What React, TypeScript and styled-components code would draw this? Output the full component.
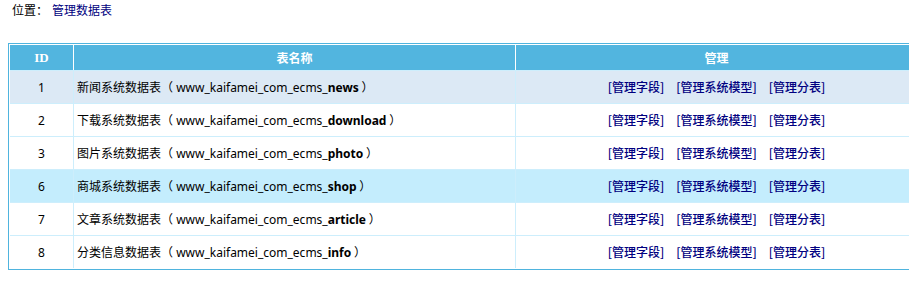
import React from "react";
import styled, { createGlobalStyle } from "styled-components";

const GlobalStyle = createGlobalStyle`
  html {
    overflow: hidden;
  }
  body {
    margin: 0;
    background: #ffffff;
    font-family: "Noto Sans", "Noto Sans CJK SC", sans-serif;
    font-size: 12px;
    color: #000000;
  }
`;

const Page = styled.div`
  padding: 0 8px;
`;

const Location = styled.div`
  height: 20px;
  line-height: 20px;
  padding: 0 4px;
  font-family: "Noto Sans CJK SC", sans-serif;
`;

const NavLink = styled.a`
  color: #000080;
  text-decoration: none;
  margin-left: 4px;
`;

const Table = styled.table`
  margin-top: 23px;
  width: 911px;
  border: 1px solid #4fb4de;
  border-collapse: separate;
  border-spacing: 0;
  padding: 1px;
  background: #ffffff;
`;

const HeadCell = styled.th<{ $first?: boolean; $serif?: boolean }>`
  height: 25px;
  padding: 0;
  background: #52b5df;
  color: #ffffff;
  font-weight: bold;
  font-size: ${(p) => (p.$serif ? "13px" : "12px")};
  font-family: ${(p) =>
    p.$serif ? '"Liberation Serif", serif' : '"Noto Sans CJK SC", sans-serif'};
  text-align: center;
  border-left: ${(p) => (p.$first ? "none" : "1px solid #ffffff")};
`;

const Row = styled.tr<{ $bg: string }>`
  background: ${(p) => p.$bg};
`;

const Cell = styled.td<{ $first?: boolean; $align?: string }>`
  height: 32px;
  padding: 0 3px;
  text-align: ${(p) => p.$align || "left"};
  border-top: 1px solid #cdeefc;
  border-left: ${(p) => (p.$first ? "none" : "1px solid #cdeefc")};
  white-space: nowrap;
`;

const Zh = styled.span`
  font-family: "Noto Sans CJK SC", sans-serif;
`;

const Key = styled.b`
  font-weight: bold;
`;

const Actions = styled.span`
  display: inline-flex;
  gap: 12px;
  font-family: "Noto Sans CJK SC", sans-serif;
`;

const Action = styled.a`
  color: #000080;
  font-weight: 500;
  text-decoration: none;
`;

const rows = [
  { id: 1, name: "新闻系统数据表", tb: "news", bg: "#dce9f5" },
  { id: 2, name: "下载系统数据表", tb: "download", bg: "#ffffff" },
  { id: 3, name: "图片系统数据表", tb: "photo", bg: "#ffffff" },
  { id: 6, name: "商城系统数据表", tb: "shop", bg: "#c4edfd" },
  { id: 7, name: "文章系统数据表", tb: "article", bg: "#ffffff" },
  { id: 8, name: "分类信息数据表", tb: "info", bg: "#ffffff" },
];

export default function App() {
  return (
    <Page>
      <GlobalStyle />
      <Location>
        位置：<NavLink href="#">管理数据表</NavLink>
      </Location>
      <Table>
        <colgroup>
          <col style={{ width: 63 }} />
          <col style={{ width: 442 }} />
          <col />
        </colgroup>
        <thead>
          <tr>
            <HeadCell $first $serif>
              ID
            </HeadCell>
            <HeadCell>表名称</HeadCell>
            <HeadCell>管理</HeadCell>
          </tr>
        </thead>
        <tbody>
          {rows.map((r) => (
            <Row key={r.id} $bg={r.bg}>
              <Cell $first $align="center">
                {r.id}
              </Cell>
              <Cell>
                <Zh>{r.name}（</Zh> www_kaifamei_com_ecms_<Key>{r.tb}</Key>
                <Zh> ）</Zh>
              </Cell>
              <Cell $align="center">
                <Actions>
                  <Action href="#">[管理字段]</Action>
                  <Action href="#">[管理系统模型]</Action>
                  <Action href="#">[管理分表]</Action>
                </Actions>
              </Cell>
            </Row>
          ))}
        </tbody>
      </Table>
    </Page>
  );
}
